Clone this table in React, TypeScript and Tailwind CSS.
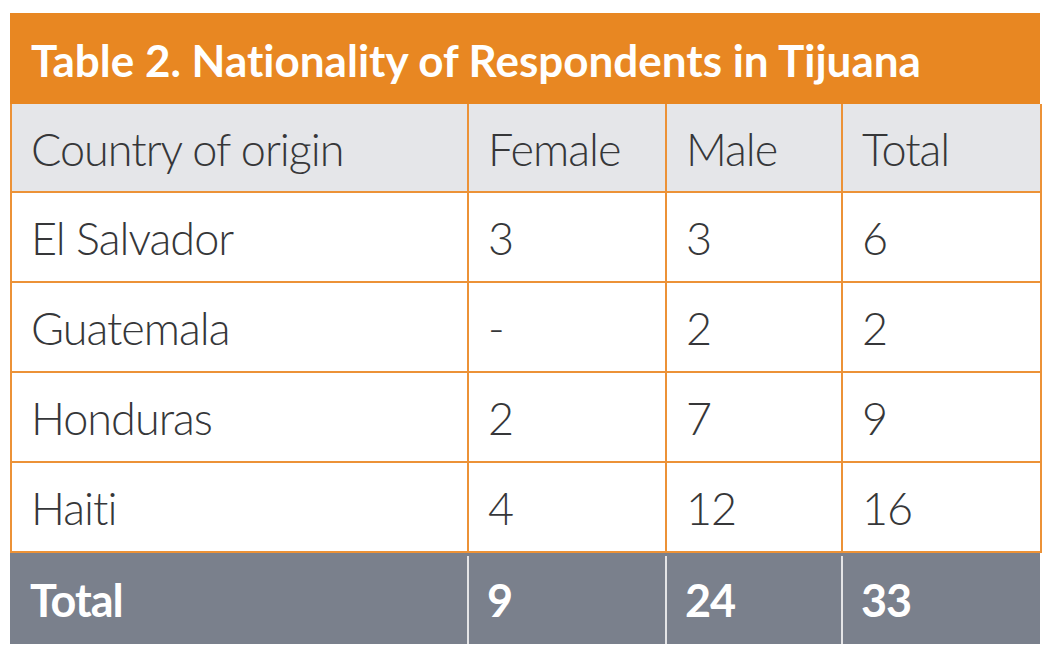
import React from "react";

const rows = [
  ["El Salvador", "3", "3", "6"],
  ["Guatemala", "-", "2", "2"],
  ["Honduras", "2", "7", "9"],
  ["Haiti", "4", "12", "16"],
];

export default function App() {
  const font = { fontFamily: "Lato, 'Open Sans', sans-serif" };
  const cell =
    "border-r-2 border-b-2 border-[#ec9237] flex items-center pl-[19px] text-[#363739] font-light text-[45px] leading-none tracking-[-1px] [font-variant-ligatures:none]";
  return (
    <div className="w-[1051px] h-[659px] bg-white pt-[13px] pl-[10px] [font-variant-ligatures:none]" style={font}>
      <div className="w-[1030px]">
        <div className="h-[91px] bg-[#e88722] flex items-center pl-[21px] pt-[2px] text-white font-bold text-[44px] leading-none tracking-[0px]">
          Table 2. Nationality of Respondents in Tijuana
        </div>
        <div className="grid grid-cols-[457px_198px_176px_199px] border-l-2 border-[#ec9237]">
          {["Country of origin", "Female", "Male", "Total"].map((h) => (
            <div key={h} className={`h-[89px] bg-[#e5e6e9] pt-[3px] ${cell}`}>
              {h}
            </div>
          ))}
          {rows.map((r) =>
            r.map((c, i) => (
              <div key={r[0] + i} className={`h-[90px] bg-white pt-[3px] ${cell}`}>
                {c}
              </div>
            ))
          )}
        </div>
        <div className="grid grid-cols-[457px_198px_176px_199px] bg-[#7a808c] h-[91px]">
          {["Total", "9", "24", "33"].map((c, i) => (
            <div key={i} className="flex items-stretch pt-[3px]">
              {i > 0 && <div className="w-[2px] bg-[#e4e4e6] shrink-0" />}
              <div
                className={`flex items-center ${i === 0 ? "pl-[20px]" : "pl-[18px]"} text-white font-bold text-[45px] leading-none tracking-[-1px]`}
              >
                {c}
              </div>
            </div>
          ))}
        </div>
      </div>
    </div>
  );
}
